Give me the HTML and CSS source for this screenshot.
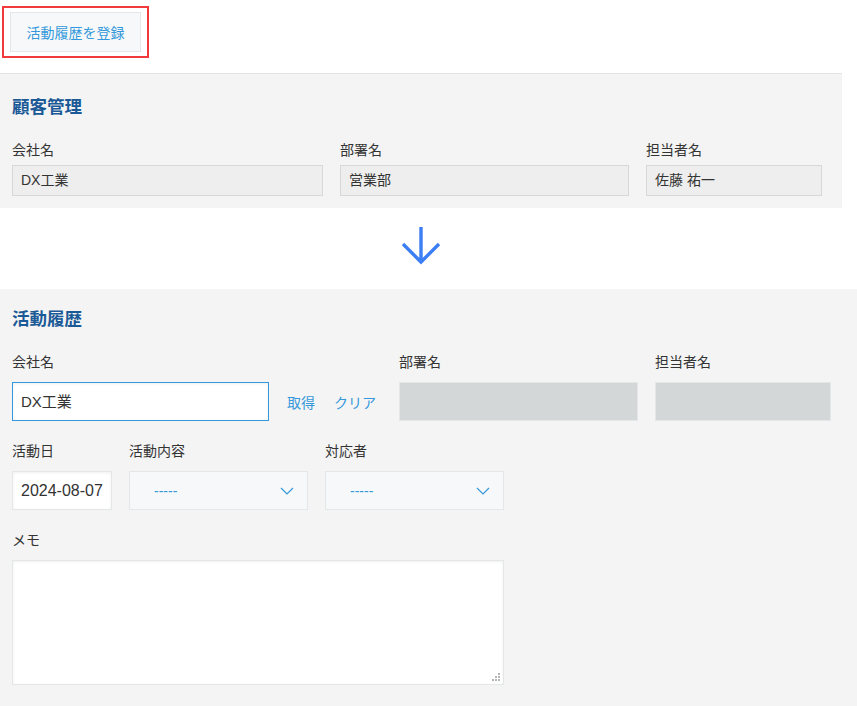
FILE: index.html
```html
<!DOCTYPE html>
<html lang="ja">
<head>
<meta charset="utf-8">
<link rel="stylesheet" href="styles.css">
</head>
<body>
<div class="top">
  <div class="highlight"><div class="btn">活動履歴を登録</div></div>
</div>
<section class="panel panel-customer">
  <h2 class="title">顧客管理</h2>
  <div class="row row-customer">
    <div class="field"><div class="label">会社名</div><div class="ro">DX工業</div></div>
    <div class="field"><div class="label">部署名</div><div class="ro">営業部</div></div>
    <div class="field"><div class="label">担当者名</div><div class="ro">佐藤 祐一</div></div>
  </div>
</section>
<div class="arrow-area">
  <svg width="40" height="40" viewBox="0 0 40 40" class="arrow"><path d="M20 1 V37 M2 18 L20 36 L38 18" fill="none" stroke="#3c7ff4" stroke-width="3.4"/></svg>
</div>
<section class="panel panel-activity">
  <h2 class="title">活動履歴</h2>
  <div class="row row-a1">
    <div class="field"><div class="label">会社名</div>
      <div class="with-links"><div class="text focus">DX工業</div><span class="link">取得</span><span class="link">クリア</span></div>
    </div>
    <div class="field"><div class="label">部署名</div><div class="disabled"></div></div>
    <div class="field"><div class="label">担当者名</div><div class="disabled"></div></div>
  </div>
  <div class="row row-a2">
    <div class="field"><div class="label">活動日</div><div class="text date">2024-08-07</div></div>
    <div class="field"><div class="label">活動内容</div><div class="select"><span>-----</span><svg width="14" height="8" viewBox="0 0 14 8"><path d="M1 1 L7 7 L13 1" fill="none" stroke="#3498db" stroke-width="1.2"/></svg></div></div>
    <div class="field"><div class="label">対応者</div><div class="select"><span>-----</span><svg width="14" height="8" viewBox="0 0 14 8"><path d="M1 1 L7 7 L13 1" fill="none" stroke="#3498db" stroke-width="1.2"/></svg></div></div>
  </div>
  <div class="row row-a3">
    <div class="field"><div class="label">メモ</div><div class="textarea"><svg class="grip" width="9" height="9" viewBox="0 0 9 9"><g fill="#b5b5b5"><rect x="6" y="0" width="2" height="2"/><rect x="3" y="3" width="2" height="2"/><rect x="6" y="3" width="2" height="2"/><rect x="0" y="6" width="2" height="2"/><rect x="3" y="6" width="2" height="2"/><rect x="6" y="6" width="2" height="2"/></g></svg></div></div>
  </div>
</section>
</body>
</html>
```
FILE: styles.css
```css
* { box-sizing: border-box; }
html, body { margin: 0; padding: 0; background: #fff; }
body {
  font-family: "Liberation Sans", "Noto Sans CJK JP", sans-serif;
  font-size: 14px;
  color: #333;
  width: 857px;
  height: 706px;
  overflow: hidden;
}
.top { height: 73px; padding: 6px 0 0 2px; }
.highlight {
  display: inline-block;
  border: 2px solid #f23a3a;
  padding: 4px 6px 4px 6px;
}
.btn {
  width: 131px;
  height: 40px;
  background: #f6f8f9;
  border: 1px solid #e3e7e8;
  color: #3498db;
  font-size: 14px;
  display: flex;
  align-items: center;
  justify-content: center;
}
.panel { background: #f4f4f4; }
.panel-customer {
  width: 842px;
  border-top: 1px solid #e3e3e3;
  padding: 21px 12px 12px;
  height: 135px;
}
.title {
  margin: 0;
  font-size: 17.5px;
  line-height: 24px;
  font-weight: bold;
  color: #1b5a97;
}
.label { line-height: 20px; font-size: 14px; color: #333; }
.row { display: grid; column-gap: 17px; }
.row-customer { grid-template-columns: 311px 289px 176px; margin-top: 21px; }
.row-customer .label { margin-bottom: 5px; }
.ro {
  height: 31px;
  background: #eee;
  border: 1px solid #d8d8d8;
  padding: 0 8px;
  line-height: 29px;
  font-size: 14px;
  color: #333;
}
.arrow-area {
  height: 81px;
  display: flex;
  justify-content: center;
  padding: 18px 0 0 0;
}
.arrow { margin-left: -16px; }
.panel-activity {
  padding: 18px 12px 0;
  height: 417px;
}
.panel-activity .label { margin-bottom: 10px; }
.row-a1 { grid-template-columns: 370px 239px 176px; margin-top: 21px; }
.with-links { display: flex; align-items: center; }
.text {
  height: 39px;
  background: #fff;
  border: 1px solid #e3e7e8;
  box-shadow: inset 0 1px 3px #f0f0f0;
  padding: 0 8px;
  line-height: 37px;
  font-size: 15px;
  color: #333;
}
.text.focus { width: 257px; border-color: #3498db; }
.link { color: #3498db; font-size: 14px; margin-left: 18px; }
.link + .link { margin-left: 19px; }
.disabled {
  height: 39px;
  background: #d4d7d7;
  border: 1px solid #e3e7e8;
}
.row-a2 { grid-template-columns: 100px 179px 179px; margin-top: 20px; }
.date { padding: 0 0 0 8px; font-size: 16px; }
.select {
  height: 39px;
  background: #f6f8f9;
  border: 1px solid #e3e7e8;
  display: flex;
  align-items: center;
  justify-content: space-between;
  padding: 0 13px 0 24px;
  color: #3498db;
  font-size: 14px;
}
.row-a3 { grid-template-columns: 492px; margin-top: 20px; }
.textarea {
  position: relative;
  height: 125px;
  background: #fff;
  border: 1px solid #e3e7e8;
  box-shadow: inset 0 1px 3px #f0f0f0;
}
.grip { position: absolute; right: 2px; bottom: 2px; }
```
